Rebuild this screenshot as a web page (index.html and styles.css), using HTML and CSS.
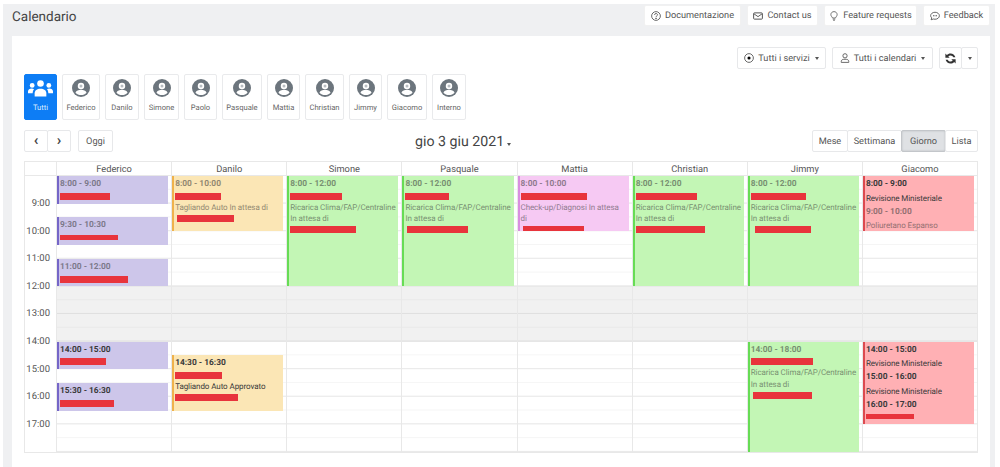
FILE: index.html
```html
<!DOCTYPE html>
<html lang="it">
<head>
  <meta charset="UTF-8">
  <title>Calendario</title>
  <link rel="stylesheet" href="styles.css">
</head>
<body>
  <svg class="sprites" xmlns="http://www.w3.org/2000/svg">
    <symbol id="i-user" viewBox="0 0 24 24">
      <circle cx="12" cy="12" r="12" fill="#6c757d"/>
      <circle cx="12" cy="9.4" r="4.3" fill="#fff"/>
      <circle cx="12" cy="9.4" r="2" fill="#b9bec3"/>
      <path d="M4.6 18.2c1.2-2.9 4-3.9 7.4-3.9s6.2 1 7.4 3.9c-1.9 2-4.5 3.1-7.4 3.1s-5.5-1.1-7.4-3.1z" fill="#fff"/>
    </symbol>
    <symbol id="i-group" viewBox="0 0 24 16">
      <circle cx="12" cy="3.2" r="3.2"/>
      <circle cx="4" cy="5" r="2.3"/>
      <circle cx="20" cy="5" r="2.3"/>
      <path d="M6.4 15.6v-3c0-2.6 2.2-4.3 5.6-4.3s5.6 1.7 5.6 4.3v3z"/>
      <path d="M0 12.6v-1.8c0-1.5 1.5-2.7 3.6-2.7.9 0 1.6.2 2.2.5-.9 1-1.3 2.2-1.3 3.6v.4z"/>
      <path d="M24 12.6v-1.8c0-1.5-1.5-2.7-3.6-2.7-.9 0-1.6.2-2.2.5.9 1 1.3 2.2 1.3 3.6v.4z"/>
    </symbol>
    <symbol id="i-help" viewBox="0 0 16 16">
      <circle cx="8" cy="8" r="7" fill="none" stroke="currentColor" stroke-width="1.4"/>
      <path d="M5.6 6.2C5.7 4.8 6.7 4 8 4c1.4 0 2.4.9 2.4 2 0 1.900-2.400 1.900-2.400 3.800" fill="none" stroke="currentColor" stroke-width="1.4"/>
      <circle cx="8" cy="11.700" r="1"/>
    </symbol>
    <symbol id="i-mail" viewBox="0 0 16 12">
      <rect x="1" y="1" width="14" height="10" rx="1.200" fill="none" stroke="currentColor" stroke-width="1.600"/>
      <path d="M1.500 2.500 8 7l6.500-4.500" fill="none" stroke="currentColor" stroke-width="1.500"/>
    </symbol>
    <symbol id="i-bulb" viewBox="0 0 12 16">
      <path d="M3.600 11.200C3.300 9.500 1 8.400 1 5.700 1 3 3.200 1 6 1s5 2 5 4.700c0 2.700-2.300 3.800-2.600 5.500z" fill="none" stroke="currentColor" stroke-width="1.300"/>
      <path d="M4 13h4M4.800 15h2.400" fill="none" stroke="currentColor" stroke-width="1.300"/>
    </symbol>
    <symbol id="i-chat" viewBox="0 0 16 14">
      <path d="M8 1c3.900 0 7 2.500 7 5.600s-3.100 5.600-7 5.600c-.9 0-1.800-.1-2.600-.4L1.800 13l.9-3C1.700 9 1 7.900 1 6.600 1 3.500 4.100 1 8 1z" fill="none" stroke="currentColor" stroke-width="1.400"/>
      <path d="M4.800 6.600h6.400" stroke="currentColor" stroke-width="1.800" stroke-dasharray="1.600 .8"/>
    </symbol>
    <symbol id="i-target" viewBox="0 0 16 16">
      <circle cx="8" cy="8" r="7" fill="none" stroke="currentColor" stroke-width="1.400"/>
      <circle cx="8" cy="8" r="2.500"/>
    </symbol>
    <symbol id="i-person" viewBox="0 0 14 16">
      <circle cx="7" cy="4.500" r="3.400" fill="none" stroke="currentColor" stroke-width="1.400"/>
      <path d="M1 15v-1.500C1 11 3 10 7 10s6 1 6 3.500V15z" fill="none" stroke="currentColor" stroke-width="1.400"/>
    </symbol>
    <symbol id="i-sync" viewBox="0 0 16 16">
      <path d="M14 6.500C13.200 3.600 10.800 1.700 8 1.700 6.200 1.700 4.600 2.400 3.500 3.600L1.700 1.800v5.400H7L5.300 5.400C6 4.700 6.900 4.300 8 4.300c1.600 0 2.900 1 3.400 2.200z"/>
      <path d="M2 9.500c.8 2.900 3.200 4.800 6 4.800 1.800 0 3.400-.7 4.500-1.900l1.800 1.800V8.800H9l1.700 1.800c-.7.7-1.600 1.100-2.700 1.100-1.600 0-2.900-1-3.400-2.200z"/>
    </symbol>
  </svg>

  <div class="app">
    <header class="topbar">
      <h1 class="page-title">Calendario</h1>
      <nav class="top-links">
        <a class="btn top-doc"><svg class="ico"><use href="#i-help"/></svg>Documentazione</a>
        <a class="btn top-contact"><svg class="ico"><use href="#i-mail"/></svg>Contact us</a>
        <a class="btn top-feature"><svg class="ico"><use href="#i-bulb"/></svg>Feature requests</a>
        <a class="btn top-feedback"><svg class="ico"><use href="#i-chat"/></svg>Feedback</a>
      </nav>
    </header>

    <main class="card">
      <div class="filters">
        <a class="btn drop filter-services"><svg class="ico"><use href="#i-target"/></svg>Tutti i servizi<i class="caret"></i></a>
        <a class="btn drop filter-calendars"><svg class="ico"><use href="#i-person"/></svg>Tutti i calendari<i class="caret"></i></a>
        <div class="btn-group">
          <a class="btn refresh"><svg class="ico-sync"><use href="#i-sync"/></svg></a>
          <a class="btn refresh-more"><i class="caret"></i></a>
        </div>
      </div>

      <div class="people">
        <a class="person active w33"><svg class="group-ico"><use href="#i-group"/></svg><span>Tutti</span></a>
        <a class="person w38"><svg class="avatar"><use href="#i-user"/></svg><span>Federico</span></a>
        <a class="person w34"><svg class="avatar"><use href="#i-user"/></svg><span>Danilo</span></a>
        <a class="person w35"><svg class="avatar"><use href="#i-user"/></svg><span>Simone</span></a>
        <a class="person w33"><svg class="avatar"><use href="#i-user"/></svg><span>Paolo</span></a>
        <a class="person w40"><svg class="avatar"><use href="#i-user"/></svg><span>Pasquale</span></a>
        <a class="person w33"><svg class="avatar"><use href="#i-user"/></svg><span>Mattia</span></a>
        <a class="person w39"><svg class="avatar"><use href="#i-user"/></svg><span>Christian</span></a>
        <a class="person w33"><svg class="avatar"><use href="#i-user"/></svg><span>Jimmy</span></a>
        <a class="person w40"><svg class="avatar"><use href="#i-user"/></svg><span>Giacomo</span></a>
        <a class="person w34"><svg class="avatar"><use href="#i-user"/></svg><span>Interno</span></a>
      </div>

      <div class="cal-nav">
        <div class="cal-nav-left">
          <div class="btn-group">
            <a class="btn arrow">‹</a>
            <a class="btn arrow">›</a>
          </div>
          <a class="btn today">Oggi</a>
        </div>
        <div class="cal-title">gio 3 giu 2021<i class="caret"></i></div>
        <div class="btn-group views">
          <a class="btn v-month">Mese</a>
          <a class="btn v-week">Settimana</a>
          <a class="btn v-day selected">Giorno</a>
          <a class="btn v-list">Lista</a>
        </div>
      </div>

      <section class="schedule">
        <div class="corner"></div>
        <div class="day-head">Federico</div>
        <div class="day-head">Danilo</div>
        <div class="day-head">Simone</div>
        <div class="day-head">Pasquale</div>
        <div class="day-head">Mattia</div>
        <div class="day-head">Christian</div>
        <div class="day-head">Jimmy</div>
        <div class="day-head">Giacomo</div>

        <div class="axis">
          <span class="h9">9:00</span>
          <span class="h10">10:00</span>
          <span class="h11">11:00</span>
          <span class="h12">12:00</span>
          <span class="h13">13:00</span>
          <span class="h14">14:00</span>
          <span class="h15">15:00</span>
          <span class="h16">16:00</span>
          <span class="h17">17:00</span>
        </div>

        <div class="col">
          <div class="closed"></div>
          <div class="event purple past s8 e9"><b>8:00 - 9:00</b><span class="bar" style="width:50px"></span></div>
          <div class="event purple past s95 e105"><b>9:30 - 10:30</b><span class="bar thin" style="width:58px"></span></div>
          <div class="event purple past s11 e12"><b>11:00 - 12:00</b><span class="bar" style="width:68px"></span></div>
          <div class="event purple s14 e15"><b>14:00 - 15:00</b><span class="bar" style="width:46px"></span></div>
          <div class="event purple s155 e165"><b>15:30 - 16:30</b><span class="bar" style="width:54px"></span></div>
        </div>

        <div class="col">
          <div class="closed"></div>
          <div class="event peach past s8 e10"><b>8:00 - 10:00</b><span class="bar" style="width:46px"></span><p>Tagliando Auto In attesa di</p><span class="bar in2" style="width:57px"></span></div>
          <div class="event peach s145 e165"><b>14:30 - 16:30</b><span class="bar" style="width:47px"></span><p>Tagliando Auto Approvato</p><span class="bar" style="width:63px"></span></div>
        </div>

        <div class="col">
          <div class="closed"></div>
          <div class="event green past s8 e12"><b>8:00 - 12:00</b><span class="bar" style="width:52px"></span><p>Ricarica Clima/FAP/Centraline</p><p>In attesa di</p><span class="bar" style="width:66px"></span></div>
        </div>

        <div class="col">
          <div class="closed"></div>
          <div class="event green past s8 e12"><b>8:00 - 12:00</b><span class="bar" style="width:44px"></span><p>Ricarica Clima/FAP/Centraline</p><p>In attesa di</p><span class="bar in2" style="width:61px"></span></div>
        </div>

        <div class="col">
          <div class="closed"></div>
          <div class="event pink past s8 e10"><b>8:00 - 10:00</b><span class="bar" style="width:66px"></span><p>Check-up/Diagnosi In attesa</p><p>di</p><span class="bar in2" style="width:61px"></span></div>
        </div>

        <div class="col">
          <div class="closed"></div>
          <div class="event green past s8 e12"><b>8:00 - 12:00</b><span class="bar" style="width:61px"></span><p>Ricarica Clima/FAP/Centraline</p><p>In attesa di</p><span class="bar" style="width:69px"></span></div>
        </div>

        <div class="col">
          <div class="closed"></div>
          <div class="event green past s8 e12"><b>8:00 - 12:00</b><span class="bar" style="width:55px"></span><p>Ricarica Clima/FAP/Centraline</p><p>In attesa di</p><span class="bar in4" style="width:56px"></span></div>
          <div class="event green past s14 e18"><b>14:00 - 18:00</b><span class="bar" style="width:62px"></span><p>Ricarica Clima/FAP/Centraline</p><p>In attesa di</p><span class="bar in2" style="width:59px"></span></div>
        </div>

        <div class="col">
          <div class="closed"></div>
          <div class="event red s8 e9"><b>8:00 - 9:00</b><p>Revisione Ministeriale</p></div>
          <div class="event red past s9 e10"><b>9:00 - 10:00</b><p>Poliuretano Espanso</p></div>
          <div class="event red s14 e15"><b>14:00 - 15:00</b><p>Revisione Ministeriale</p></div>
          <div class="event red s15 e16"><b>15:00 - 16:00</b><p>Revisione Ministeriale</p></div>
          <div class="event red s16 e17"><b>16:00 - 17:00</b><span class="bar thin" style="width:48px"></span></div>
        </div>
      </section>
    </main>
  </div>
</body>
</html>
```

FILE: styles.css
```css
* {
  box-sizing: border-box;
}
html, body {
  margin: 0;
  height: 467px;
  overflow: hidden;
  background-color: #fff;
}
body {
  font-family: Roboto, "Open Sans", sans-serif;
  font-size: 9.2px;
  color: #555;
  text-rendering: geometricPrecision;
}
.sprites {
  display: none;
}

/* page frame */
.app {
  margin: 4px 5px 0 3px;
  height: 463px;
  padding: 0 5px 0 9px;
  background-color: #eff0f2;
  overflow: hidden;
}
.topbar {
  display: flex;
  align-items: flex-start;
  justify-content: space-between;
  height: 32px;
  padding-top: 1px;
}
.page-title {
  margin: 2px 0 0;
  font-size: 13.5px;
  font-weight: 400;
  line-height: 20px;
  color: #444;
}
.top-links {
  display: flex;
  gap: 6px;
}
.top-links .btn {
  height: 21px;
  border-color: #f1f1f1;
}
.top-doc { width: 97px; }
.top-contact { width: 71px; }
.top-feature { width: 93px; }
.top-feedback { width: 67px; }

/* buttons */
.btn {
  display: flex;
  align-items: center;
  justify-content: center;
  background-color: #fff;
  border: 1px solid #e7e8ea;
  border-radius: 2px;
  color: #555;
  white-space: nowrap;
}
.ico {
  width: 10px;
  height: 10px;
  margin-right: 4px;
}
.btn-group {
  display: flex;
}
.btn-group .btn + .btn {
  margin-left: -1px;
}
.caret {
  display: inline-block;
  margin-left: 5px;
  border-top: 3px solid #555;
  border-left: 2.5px solid transparent;
  border-right: 2.5px solid transparent;
}

.card {
  height: 431px;
  padding: 11px 12px 0;
  background-color: #fff;
}
.filters {
  display: flex;
  justify-content: flex-end;
  gap: 6px;
  height: 22px;
}
.filter-services { width: 89px; }
.filter-calendars { width: 101px; }
.refresh { width: 23px; }
.refresh-more { width: 17px; }
.refresh-more .caret { margin-left: 0; }
.ico-sync {
  width: 13px;
  height: 13px;
  fill: #333;
}

/* staff selector */
.people {
  display: flex;
  gap: 5px;
  height: 46px;
  margin-top: 5px;
}
.person {
  display: flex;
  flex-direction: column;
  align-items: center;
  padding-top: 4px;
  border: 1px solid #e9eaec;
  border-radius: 2px;
  font-size: 7.6px;
  color: #666;
}
.person span {
  margin-top: 5px;
  line-height: 12px;
}
.avatar {
  width: 18px;
  height: 18px;
}
.group-ico {
  width: 25px;
  height: 17px;
  margin: 1px 0 0;
  fill: #fff;
}
.person.active {
  background-color: #0d7df5;
  border-color: #0d7df5;
  color: #dcecff;
}
.w33 { width: 33px; }
.w34 { width: 34px; }
.w35 { width: 35px; }
.w38 { width: 38px; }
.w39 { width: 39px; }
.w40 { width: 40px; }

/* month/day navigation */
.cal-nav {
  position: relative;
  display: flex;
  justify-content: space-between;
  height: 22px;
  margin-top: 10px;
}
.cal-nav-left {
  display: flex;
  gap: 7px;
}
.arrow {
  width: 24px;
  font-size: 15px;
  font-weight: 600;
  line-height: 18px;
  padding-bottom: 3px;
  color: #444;
}
.today {
  width: 35px;
}
.cal-title {
  position: absolute;
  left: 391px;
  top: 2px;
  font-size: 14.2px;
  line-height: 20px;
  color: #444;
}
.cal-title .caret {
  margin-left: 3px;
}
.v-month { width: 36px; }
.v-week { width: 55px; }
.v-day { width: 45px; }
.v-list { width: 33px; }
.views .btn.selected {
  background-color: #dfe1e4;
  border: 1px solid #c3c6ca;
  box-shadow: inset 0 0 2px #b5b8bc;
}

/* day grid */
.schedule {
  display: grid;
  grid-template-columns: 31px repeat(8, 1fr);
  width: 954px;
  margin-top: 9px;
  border: 1px solid #e8e8e8;
}
.corner,
.day-head {
  height: 14px;
  border-bottom: 1px solid #e8e8e8;
}
.day-head {
  border-left: 1px solid #e8e8e8;
  font-size: 9.3px;
  line-height: 15px;
  text-align: center;
  color: #555;
}
.axis,
.col {
  display: grid;
  grid-template-columns: 100%;
  grid-template-rows: repeat(20, 13.8px);
}
.axis span {
  align-self: center;
  padding: 1px 6px 0 0;
  text-align: right;
  font-size: 9.5px;
  line-height: 12px;
  color: #555;
}
.col {
  border-left: 1px solid #e8e8e8;
  background-image:
    linear-gradient(#e9e9e9 1px, transparent 1px),
    linear-gradient(#f5f5f5 1px, transparent 1px);
  background-size: 100% 27.6px, 100% 13.8px;
  background-position: 0 -1px, 0 -1px;
}
.col > * {
  grid-column: 1;
}
.closed {
  grid-row: 9 / 13;
  background-color: rgba(200, 200, 200, 0.25);
}

/* bookings */
.event {
  margin-right: 3px;
  padding: 3px 0 0 1px;
  border-left: 2px solid;
  overflow: hidden;
  font-size: 8px;
  letter-spacing: -0.08px;
  line-height: 11.3px;
  color: #3a3a3a;
  z-index: 1;
}
.event b {
  display: block;
  margin-bottom: 2.5px;
  font-size: 8.4px;
  letter-spacing: 0;
  font-weight: 700;
}
.event p {
  margin: 0;
  white-space: nowrap;
}
.past b,
.past p {
  opacity: 0.55;
}
.bar {
  display: block;
  height: 7px;
  margin: 2px 0;
  background-color: #e8343c;
}
.bar.thin {
  height: 5px;
  margin: 3px 0;
}
.in2 { margin-left: 2px; }
.in4 { margin-left: 4px; }
.purple { background-color: #cdc6ea; border-color: #7566c8; }
.peach { background-color: #fbe6b5; border-color: #efb24c; }
.green { background-color: #c3f6b5; border-color: #67dc55; }
.pink { background-color: #f6c9f3; border-color: #d98fe0; }
.red { background-color: #ffb0b4; border-color: #dc4a50; }

/* hour labels sit across the line they name */
.h9 { grid-row: 2 / 4; }
.h10 { grid-row: 4 / 6; }
.h11 { grid-row: 6 / 8; }
.h12 { grid-row: 8 / 10; }
.h13 { grid-row: 10 / 12; }
.h14 { grid-row: 12 / 14; }
.h15 { grid-row: 14 / 16; }
.h16 { grid-row: 16 / 18; }
.h17 { grid-row: 18 / 20; }

/* half-hour rows, 8:00 is row 1 */
.s8 { grid-row-start: 1; }
.s9 { grid-row-start: 3; }
.s95 { grid-row-start: 4; }
.s11 { grid-row-start: 7; }
.s14 { grid-row-start: 13; }
.s145 { grid-row-start: 14; }
.s15 { grid-row-start: 15; }
.s155 { grid-row-start: 16; }
.s16 { grid-row-start: 17; }
.e9 { grid-row-end: 3; }
.e10 { grid-row-end: 5; }
.e105 { grid-row-end: 6; }
.e12 { grid-row-end: 9; }
.e15 { grid-row-end: 15; }
.e16 { grid-row-end: 17; }
.e165 { grid-row-end: 18; }
.e17 { grid-row-end: 19; }
.e18 { grid-row-end: 21; }
```
